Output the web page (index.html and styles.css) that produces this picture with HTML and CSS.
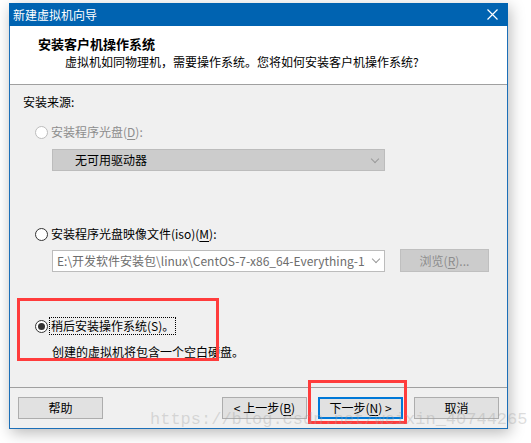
FILE: index.html
```html
<!doctype html>
<html lang="zh-CN">
 <head>
  <meta charset="UTF-8">
  <meta name="viewport" content="width=device-width, initial-scale=1.0">
  <title>新建虚拟机向导</title>
  <link rel="stylesheet" href="styles.css">
 </head>
 <body>
  <div class="window">
   <div class="titlebar">
    <span class="title">新建虚拟机向导</span>
    <svg class="close" width="11" height="11" viewBox="0 0 11 11"><path d="M0.5 0.5 L10.5 10.5 M10.5 0.5 L0.5 10.5" stroke="#fff" stroke-width="1.2"/></svg>
   </div>
   <div class="header">
    <div class="header-title">安装客户机操作系统</div>
    <div class="header-sub">虚拟机如同物理机，需要操作系统。您将如何安装客户机操作系统?</div>
   </div>
   <div class="content">
    <div class="line">安装来源:</div>

    <div class="option option-first disabled">
     <span class="radio"></span>
     <span class="label">安装程序光盘(<u>D</u>):</span>
    </div>
    <div class="combo combo-disabled">
     <span class="combo-text">无可用驱动器</span>
     <span class="chevron"></span>
    </div>

    <div class="option option-iso">
     <span class="radio"></span>
     <span class="label">安装程序光盘映像文件(iso)(<u>M</u>):</span>
    </div>
    <div class="iso-row">
     <div class="combo combo-edit">
      <span class="combo-text">E:\开发软件安装包\linux\CentOS-7-x86_64-Everything-1804.iso</span>
      <span class="chevron"></span>
     </div>
     <div class="btn btn-disabled">浏览(<u>R</u>)...</div>
    </div>

    <div class="option option-later">
     <span class="radio checked"></span>
     <span class="label focus">稍后安装操作系统(S)。</span>
    </div>
    <div class="line desc">创建的虚拟机将包含一个空白硬盘。</div>
   </div>
   <div class="footer">
    <div class="btn">帮助</div>
    <div class="spacer"></div>
    <div class="btn">&lt; 上一步(<u>B</u>)</div>
    <div class="btn btn-default">下一步(<u>N</u>) &gt;</div>
    <div class="btn">取消</div>
   </div>
  </div>

  <div class="mark mark-later"></div>
  <div class="mark mark-next"></div>
  <div class="watermark">https://blog.csdn.net/weixin_40744265</div>
 </body>
</html>
```

FILE: styles.css
```css
* {
  margin: 0;
  padding: 0;
  box-sizing: border-box;
}

body {
  background: #fff;
  padding: 3px 0 0 9px;
  font-family: "Noto Sans CJK SC", "Noto Sans", sans-serif;
  font-size: 12px;
  line-height: 16px;
  color: #000;
  width: 531px;
  height: 443px;
  overflow: hidden;
  position: relative;
}

u {
  text-decoration: underline;
  text-underline-offset: 2px;
}

.window {
  width: 499px;
  height: 426px;
  border: 1px solid #1c6fb8;
  border-top: none;
  background: #f0f0f0;
  display: flex;
  flex-direction: column;
  box-shadow: 2px 4px 14px rgba(0, 0, 0, 0.28);
}

.titlebar {
  height: 23px;
  margin: 0 -1px;
  background: #0063b1;
  color: #fff;
  display: flex;
  align-items: center;
  justify-content: space-between;
  padding: 0 10px 0 4px;
}

.title {
  font-size: 12px;
}

.close {
  display: block;
}

.header {
  height: 59px;
  background: #fff;
  border-bottom: 1px solid #a0a0a0;
  padding: 10px 0 0 28px;
}

.header-title {
  font-weight: bold;
  font-size: 13px;
}

.header-sub {
  margin-top: 2px;
  padding-left: 27px;
}

.content {
  flex: 1;
  padding: 9px 0 0 13px;
  border-bottom: 1px solid #a0a0a0;
}

.option {
  display: flex;
  align-items: center;
  height: 16px;
  padding-left: 12px;
}

.option-first {
  margin-top: 14px;
}

.option-iso {
  margin-top: 55px;
}

.option-later {
  margin-top: 46px;
}

.radio {
  width: 13px;
  height: 13px;
  border: 1px solid #333;
  border-radius: 50%;
  background: #fff;
  margin-right: 3px;
  display: flex;
  align-items: center;
  justify-content: center;
}

.radio.checked::after {
  content: "";
  width: 7px;
  height: 7px;
  border-radius: 50%;
  background: #333;
}

.disabled {
  color: #8d8d8d;
}

.disabled .radio {
  border-color: #bcbcbc;
}

.focus {
  outline: 1px dotted #000;
  padding: 0 1px;
  margin-left: -1px;
}

.combo {
  width: 333px;
  height: 22px;
  margin-left: 29px;
  display: flex;
  align-items: center;
  justify-content: space-between;
  border: 1px solid #bcbcbc;
}

.combo-disabled {
  margin-top: 9px;
  background: #cccccc;
  padding: 0 6px 0 22px;
}

.combo-text {
  white-space: nowrap;
  overflow: hidden;
}

.combo-edit {
  background: #fff;
  color: #6d6d6d;
  padding: 0 5px 0 4px;
}

.combo-edit .combo-text {
  width: 308px;
}

.chevron {
  width: 6px;
  height: 6px;
  border-right: 1px solid #9a9a9a;
  border-bottom: 1px solid #9a9a9a;
  transform: rotate(45deg);
  margin-top: -3px;
  flex-shrink: 0;
}

.iso-row {
  display: flex;
  align-items: center;
  margin-top: 7px;
}

.iso-row .btn {
  margin-left: 15px;
  width: 89px;
  height: 23px;
}

.desc {
  margin-top: 10px;
  padding-left: 29px;
}

.footer {
  height: 40px;
  display: flex;
  align-items: flex-start;
  padding: 9px 8px 0 8px;
}

.spacer {
  flex: 1;
}

.btn {
  width: 85px;
  height: 22px;
  border: 1px solid #adadad;
  background: #e1e1e1;
  display: flex;
  align-items: center;
  justify-content: center;
}

.footer .btn + .btn {
  margin-left: 11px;
}

.btn-disabled {
  background: #cccccc;
  border-color: #bfbfbf;
  color: #8d8d8d;
}

.btn-default {
  border: 2px solid #0078d7;
}

.mark {
  position: absolute;
  border: 3px solid #ff3c3c;
}

.mark-later {
  left: 17px;
  top: 298px;
  width: 202px;
  height: 63px;
}

.mark-next {
  left: 308px;
  top: 380px;
  width: 99px;
  height: 44px;
}

.watermark {
  position: absolute;
  left: 150px;
  top: 410px;
  font-family: "Liberation Mono", monospace;
  font-size: 17px;
  line-height: 20px;
  color: rgba(160, 160, 160, 0.35);
  white-space: nowrap;
}
```
